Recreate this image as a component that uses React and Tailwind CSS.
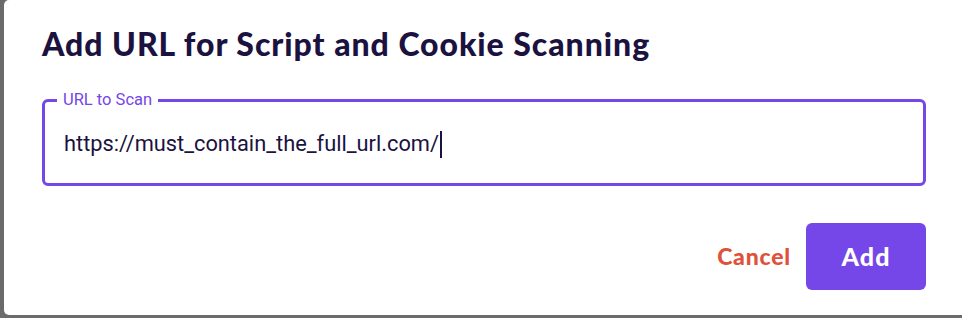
import React from 'react'

const App = () => {
  return (
    <div className="w-[962px] h-[318px] bg-[#6b6b6b] pl-1 pb-[3px] overflow-hidden">
      <div className="h-full bg-white rounded-tl-[5px] rounded-bl-[5px] pl-[38px] pr-[36px] pt-[23px]" style={{ fontFamily: 'Lato, sans-serif' }}>
        {/* Title */}
        <h2 className="text-[32px] leading-[42px] font-black text-[#1b1240] tracking-[0.95px]">
          Add URL for Script and Cookie Scanning
        </h2>

        {/* Outlined input */}
        <fieldset className="mt-[27px] h-[94px] border-[3px] border-[#7546e8] rounded-[6px] pl-[12px] pr-4 flex items-center">
          <legend className="px-[6px] text-[16.5px] leading-[16px] text-[#7546e8]" style={{ fontFamily: 'Roboto, sans-serif' }}>
            URL to Scan
          </legend>
          <div className="flex items-center -mt-[2px] pl-[7px]" style={{ fontFamily: 'Roboto, sans-serif' }}>
            <span className="text-[21.8px] text-[#1b1240]">https://must_contain_the_full_url.com/</span>
            <span className="w-[2px] h-[27px] bg-[#1b1240] ml-[1px]"></span>
          </div>
        </fieldset>

        {/* Actions */}
        <div className="flex justify-end items-center mt-[37px] gap-[15px]">
          <button className="text-[23px] font-black text-[#e0513b] tracking-[0.8px]">Cancel</button>
          <button className="w-[120px] h-[67px] rounded-[6px] bg-[#7546e8] text-white text-[25px] font-black tracking-[1px]">Add</button>
        </div>
      </div>
    </div>
  )
}

export default App
